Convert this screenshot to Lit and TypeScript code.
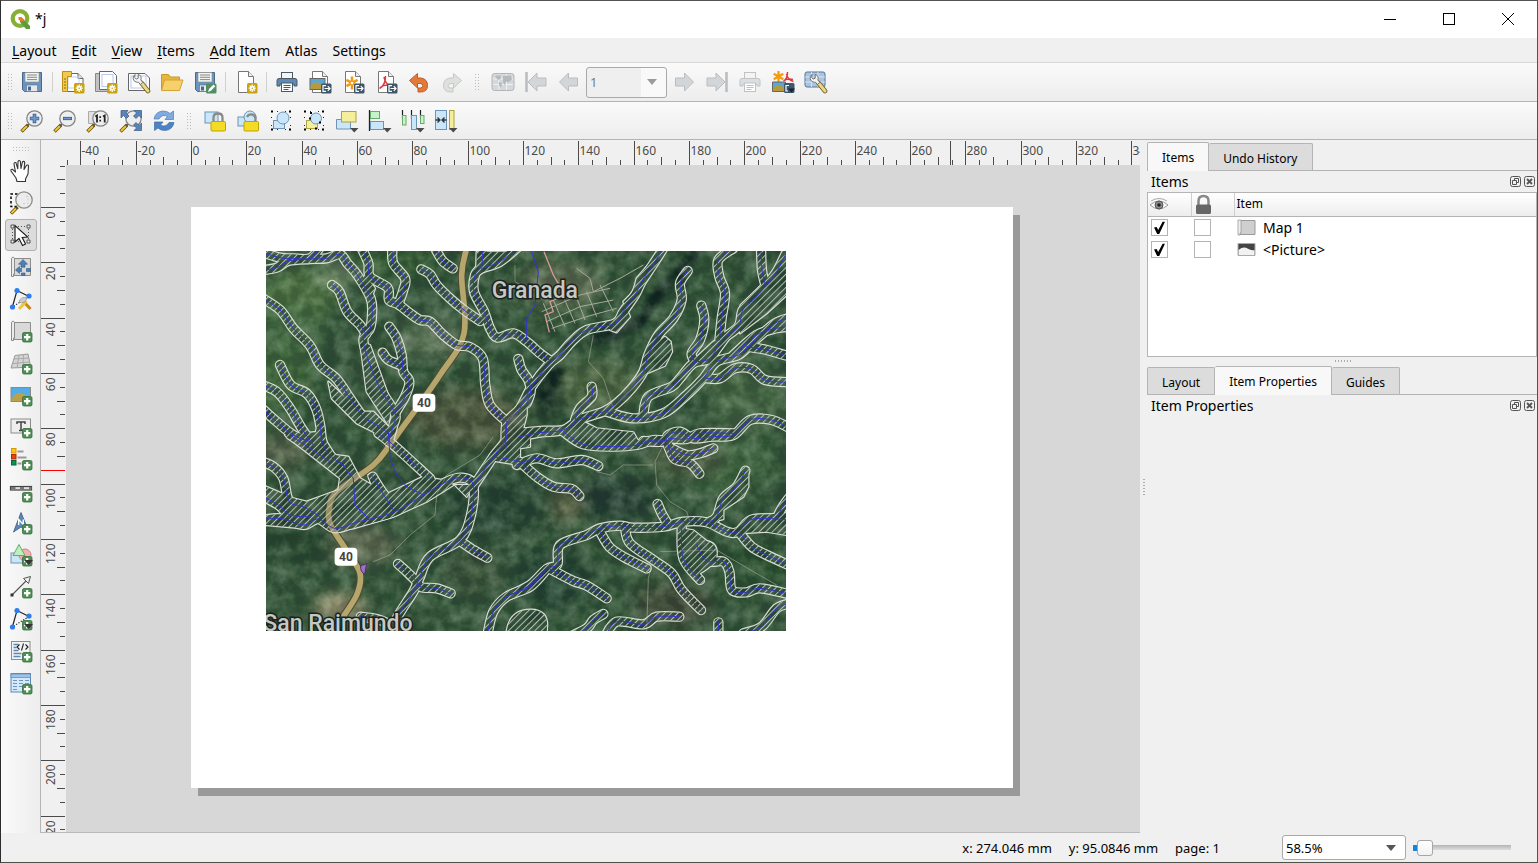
import { LitElement, html, svg, css } from "lit";
import { customElement, property } from "lit/decorators.js";

/* ---------- icon fragments, all on a 24 x 24 grid ---------- */

const plus = svg`<rect x="13.5" y="13.5" width="9.5" height="9.5" rx="1.5" fill="#4f8f55" stroke="#35703c" stroke-width=".8"/><path d="M18.2 15v6.4M15 18.2h6.4" stroke="#fff" stroke-width="2.2"/>`;
const gear = svg`<rect x="13" y="13" width="10.5" height="10.5" rx="1.5" fill="#c9a20c"/><path d="M18.2 14.5v7.4M14.6 18.2h7.3M15.7 15.6l5.2 5.2M20.9 15.6l-5.2 5.2" stroke="#fff" stroke-width="1.3"/><circle cx="18.2" cy="18.2" r="2.1" fill="#fff"/><circle cx="18.2" cy="18.2" r=".8" fill="#c9a20c"/>`;
const exp = svg`<rect x="13" y="13.5" width="10.5" height="10" rx="1.5" fill="#3d566b"/><path d="M18 15.7h-3v5.6h3M16.5 18.5h5M19.8 16.2l2.2 2.3-2.2 2.3" fill="none" stroke="#fff" stroke-width="1.2"/>`;
const drop = svg`<path d="M15 19h8.5l-4.2 4.5z" fill="#4a4a4a"/>`;
const sheet = svg`<path d="M4.500 1.500h10l5 5v16h-15z" fill="#fff" stroke="#777"/><path d="M14.500 1.500v5h5" fill="#eee" stroke="#777"/>`;
const disk = svg`<path d="M2.500 2.500h19v19h-17l-2-2z" fill="#6b94bf" stroke="#48698c"/><rect x="5" y="2.500" width="14" height="9.500" fill="#f2f2ee" stroke="#8b8b85" stroke-width=".6"/><path d="M7 5h10M7 7.300h10M7 9.600h10" stroke="#888"/><rect x="6.500" y="15" width="11" height="6.500" fill="#e8e8ec" stroke="#55708f" stroke-width=".6"/><rect x="8" y="16.500" width="3" height="4" fill="#48698c"/>`;
const lens = svg`<path d="M1.500 22.500l6.500-6.500" stroke="#5b4a18" stroke-width="3.400"/><path d="M2 22l5-5" stroke="#f3c62e" stroke-width="2"/><path d="M7 17l2.500-2.500" stroke="#555" stroke-width="2"/><circle cx="14.500" cy="9.500" r="7.700" fill="#eeeeee" stroke="#858585" stroke-width="1.300"/>`;
const scroll = svg`<path d="M5 3.500h16.500v17H5z" fill="#d9d9d9" stroke="#8c8c8c"/><path d="M2.500 3.200q1.500-2.500 3 0V19h-1v2.500h-2z" fill="#ececec" stroke="#8c8c8c"/>`;
const wrench = svg`<path d="M14.500 13l6.500 8" stroke="#6c5a22" stroke-width="4.600" stroke-linecap="round"/><path d="M14.500 13l6.500 8" stroke="#ecd783" stroke-width="3" stroke-linecap="round"/><path d="M8 4.500a4.200 4.200 0 0 0 1 7.500q1.500.5 2.500.2l2 2.300 2.300-2.200-2-2.300a4 4 0 0 0-2.600-5.600v3.800l-2 .8-1.600-1.500z" fill="#f3f3f3" stroke="#666" stroke-width=".9"/>`;
const printer = (a: string, b: string) => svg`<rect x="6.500" y="2.500" width="11" height="7" fill="#f4f4f4" stroke="${b}"/><path d="M4 8.500h16q2 0 2 2v5.500h-3v-2H5v2H2v-5.500q0-2 2-2z" fill="${a}" stroke="${b}"/><rect x="6.500" y="13" width="11" height="8.500" fill="#fff" stroke="${b}"/><path d="M8.500 15.500h7M8.500 17.500h7M8.500 19.500h5" stroke="${b}"/>`;
const landscape = svg`<rect x="2" y="8.500" width="15" height="11" fill="#5aa7d6" stroke="#666"/><path d="M2.500 15q5-4 8-2t6 3v3h-14z" fill="#b79a3e"/>`;
const star = svg`<path d="M11 6.500v13M5.400 9.800l11.200 6.400M16.600 9.800L5.400 16.200" stroke="#f39a12" stroke-width="2.500"/><circle cx="11" cy="13" r="1.300" fill="#fff"/>`;
const acro = svg`<path d="M5.500 18.500q6-3 6-12.500M10 7q1 8 9 9.500M6 17.500q6-4 12-1.500" fill="none" stroke="#e0383a" stroke-width="1.500"/>`;
const nodes = svg`<path d="M3.500 19.500L8 3.500l12 6" fill="none" stroke="#222" stroke-width="1.200"/><path d="M20 9.500l-16 10" stroke="#222" stroke-width="1.100" stroke-dasharray="1.300 1.500"/><circle cx="8" cy="3.500" r="2.600" fill="#2b7df0"/><circle cx="20" cy="9" r="2.600" fill="#2b7df0"/><circle cx="3.500" cy="20" r="2.600" fill="#2b7df0"/>`;
const arrow = "M2 12l9-9v5h9v8h-9v5z";
const dots = svg`<path d="M2 2.500h2M2 20.500h2M20 2.500h2M20 20.500h2" stroke="#000" stroke-width="2"/><path d="M8 2.500h10M8 20.500h10M2.500 8v10M21.500 8v10" stroke="#222" stroke-dasharray="1 7"/>`;
const worldmap = svg`<rect x="1" y="3.500" width="22" height="17" rx="2.500" fill="#d5d8da" stroke="#b2b6b9"/><path d="M2 9h20M2 14.500h20M8 4v16M15.500 4v16" stroke="#f6f6f6" stroke-width=".8"/><path d="M4 6l5-1 1 3-2 2-2-1zM8 12l3 1-1 5-2-3zM12 6l8-.5 1 4-4 3-2-1-1 4-2-3z" fill="#b3b9bd"/>`;

const icons: Record<string, unknown> = {
  save: disk,
  newLayout: svg`<path d="M3 3.500h14l5 5v13H3z" fill="#fff" stroke="#666"/><path d="M17 3.500v5h5" fill="#ddd" stroke="#666"/><rect x="7" y="7" width="11" height="11" fill="none" stroke="#c3d0f0"/><path d="M1.500 1.500h9v5h-4v15h-5z" fill="#f2c94b" stroke="#b98f15"/><path d="M3 9h2M3 12h2M3 15h2M3 18h2" stroke="#8b6a0c"/>${gear}`,
  duplicate: svg`<path d="M1.500 3.500H18v18H1.500z" fill="#c2c2c2" stroke="#888"/><path d="M5.500 1.500h13l4 4v14h-17z" fill="#fff" stroke="#666"/><rect x="8" y="4.500" width="11" height="12" fill="none" stroke="#b9c8ee"/>${gear}`,
  manager: svg`<path d="M1.500 3.500H18l4.500 4.500v12.500h-21z" fill="#fff" stroke="#666"/><rect x="4" y="6" width="15" height="12" fill="none" stroke="#b9c8ee"/>${wrench}`,
  open: svg`<path d="M1.500 20V4.500h7l2 2.500h9v5" fill="#e5b640" stroke="#c99a26"/><path d="M1.500 20.500L4.500 10h18.500l-3.500 10.500z" fill="#f6d06a" stroke="#d3a431"/>`,
  saveAs: svg`${disk}<rect x="13" y="13.500" width="10.500" height="10" rx="1.500" fill="#4f8f63"/><path d="M15 22l1-3 4.500-4.500 1.800 1.800L18 20.800z" fill="#fff"/>`,
  addPage: svg`${sheet}${gear}`,
  print: printer("#5f88b3", "#4b5a68"),
  image: svg`${sheet}${landscape}${exp}`,
  svgOut: svg`${sheet}${star}${exp}`,
  pdf: svg`${sheet}${acro}${exp}`,
  undo: svg`<path d="M2.500 10.500l8-7v4.500h3.500q6.500 1 6.500 7.500t-7 6.500h-2.500v-4h2.500q2.500-.5 2.300-2.500t-2.800-2H10.500v4.500z" fill="#e2793a" stroke="#c05c22"/>`,
  redo: svg`<path d="M21.500 10.500l-8-7v4.500H10q-6.500 1-6.500 7.500T10.500 22H13v-4h-2.500q-2.500-.5-2.300-2.500t2.800-2h2.500v4.500z" fill="#dde0dd" stroke="#c5c9c5"/>`,
  preview: worldmap,
  first: svg`<path d="M2.500 2v20" stroke="#b9bdc0" stroke-width="2.500"/><path d="${arrow}" transform="translate(2)" fill="#d2d6d9" stroke="#b9bdc0"/>`,
  prev: svg`<path d="${arrow}" transform="translate(.5)" fill="#d2d6d9" stroke="#b9bdc0"/>`,
  next: svg`<path d="${arrow}" transform="matrix(-1 0 0 1 23.500 0)" fill="#d2d6d9" stroke="#b9bdc0"/>`,
  last: svg`<path d="M21.500 2v20" stroke="#b9bdc0" stroke-width="2.500"/><path d="${arrow}" transform="matrix(-1 0 0 1 22 0)" fill="#d2d6d9" stroke="#b9bdc0"/>`,
  printOff: printer("#dcdfe1", "#c0c3c5"),
  atlasOut: svg`<path d="M7.500 1v11M2.700 3.800l9.600 5.500M12.300 3.800L2.700 9.300" stroke="#f39a12" stroke-width="2.200"/><path d="M12.500 11q4-2 4-9M15.500 4q1 6 7 7.500M13 10.500q4-2.500 9-1" fill="none" stroke="#e0383a" stroke-width="1.500"/><path d="M1.500 12h13v9.500h-13z" fill="#5aa7d6" stroke="#666"/><path d="M2 18q4-4 7-2.500t5 2V21H2z" fill="#b79a3e"/><rect x="13" y="13" width="10.500" height="10" rx="1.500" fill="#3d566b"/><path d="M18 15.500h-3v5.500h2" fill="none" stroke="#fff" stroke-width="1.200"/><path d="M17 18.500h7l-3.500 4z" fill="#1c2226"/>`,
  atlasSet: svg`<rect x="1" y="2" width="20" height="15" rx="2" fill="#a9c4e0" stroke="#55759a"/><path d="M1 7h20M1 12h20M7.500 2v15M14 2v15" stroke="#e5eef7" stroke-width=".8"/>${wrench}`,
  zoomIn: svg`${lens}<path d="M14.500 4.800v9.400M9.800 9.500h9.400" stroke="#3d5f8d" stroke-width="3.600"/><path d="M14.500 5.500v8M10.500 9.500h8" stroke="#6f9bd0" stroke-width="1.800"/>`,
  zoomOut: svg`${lens}<path d="M10 9.500h9" stroke="#3d5f8d" stroke-width="3.200"/><path d="M10.700 9.500h7.600" stroke="#6f9bd0" stroke-width="1.500"/>`,
  zoomOne: svg`<path d="M2.500 2.500H14v12H2.500z" fill="#e2e2e2" stroke="#aaa"/>${lens}<path d="M9.300 7.500l1.700-1v7M17 7.500l1.700-1v7" fill="none" stroke="#222" stroke-width="1.800"/><path d="M14.200 7.300v1.800M14.200 10.800v1.800" stroke="#222" stroke-width="1.700"/>`,
  zoomFull: svg`${lens}<path d="M2 1.500h7L7 4l3 3-2.500 2.500-3-3L2 9zM22.500 1.500V9L20 6.500l-3 3L14.500 7l3-3-2.500-2.500zM22.500 21.500H15l2.500-2.500-3-3 2.500-2.500 3 3 2.500-2.500z" fill="#5884b8" stroke="#34577f" stroke-width=".7"/>`,
  refresh: svg`<path d="M2 10q1.500-7.500 9-8 4.500 0 7 2.500L21.500 2v8.500H13l2.500-3q-5-3-8.500 2.500z" fill="#7fabdf" stroke="#4a7cb8" stroke-width=".7"/><path d="M22 13.500q-1.500 7.500-9 8-4.500 0-7-2.500l-3.500 2.500V13H11l-2.500 3q5 3 8.500-2.500z" fill="#4d82c4" stroke="#3c6ba6" stroke-width=".7"/>`,
  lock: svg`<rect x="2" y="3" width="13" height="11" fill="#c9e6fb" stroke="#6d94b5"/><path d="M10.500 13V8.500q0-4 4.500-4t4.500 4V13" fill="none" stroke="#8a8a8a" stroke-width="2.300"/><rect x="8" y="12.500" width="14.500" height="9.500" rx="1" fill="#f4db25" stroke="#c2a400"/>`,
  unlock: svg`<rect x="2" y="8" width="11" height="9" fill="#c9e6fb" stroke="#6d94b5"/><circle cx="14" cy="8" r="6" fill="#c9e6fb" stroke="#6d94b5"/><path d="M11 8q1.500-3 5-2.500t3.500 4V13" fill="none" stroke="#8a8a8a" stroke-width="2.300"/><rect x="8" y="12.500" width="14.500" height="9.500" rx="1" fill="#f4db25" stroke="#c2a400"/>`,
  group: svg`${dots}<rect x="4.500" y="11.500" width="11" height="8" fill="#c9e6fb" stroke="#6d94b5"/><circle cx="14" cy="9" r="6" fill="#c9e6fb" stroke="#6d94b5"/>`,
  ungroup: svg`${dots}<rect x="4.500" y="11.500" width="11" height="8" fill="#f4ee9d" stroke="#aaa53e"/><circle cx="14" cy="9.500" r="5.500" fill="#c9e6fb" stroke="#6d94b5"/><path d="M7 9.500h2M17 13.500h2M13 19.500h2M8 4h2" stroke="#000" stroke-width="2"/>`,
  raise: svg`<path d="M1.500 10.500h14v9.500h-14z" fill="#c9e6fb" stroke="#6d94b5"/><rect x="6.500" y="2.500" width="14.500" height="10.500" fill="#f4ee9d" stroke="#aaa53e"/>${drop}`,
  align: svg`<path d="M1.500 1v21" stroke="#222" stroke-width="1.300"/><rect x="2.500" y="2.500" width="9" height="7" fill="#c8f3ca" stroke="#68a96c"/><rect x="2.500" y="12.500" width="13" height="8" fill="#c9e6fb" stroke="#6d94b5"/>${drop}`,
  distribute: svg`<path d="M1.500 1v9M10.500 1v9M19.500 1v8" stroke="#222" stroke-width="1.200"/><rect x="1.500" y="6.500" width="3.500" height="9.500" fill="#c8f3ca" stroke="#68a96c"/><rect x="10.500" y="6.500" width="5" height="14" fill="#c9e6fb" stroke="#6d94b5"/><rect x="19.500" y="6.500" width="3.500" height="8" fill="#c8f3ca" stroke="#68a96c"/>${drop}`,
  resize: svg`<rect x="1.500" y="1.500" width="11" height="19" fill="#c9e6fb" stroke="#6d94b5"/><rect x="15.500" y="1.500" width="4.500" height="19" fill="#f4ee9d" stroke="#aaa53e"/><path d="M1.500 11h4M3.500 8.500L6 11l-2.500 2.500M12.500 11h-4M10.500 8.500L8 11l2.500 2.500" fill="none" stroke="#333" stroke-width="1.300"/>${drop}`,
  pan: svg`<path d="M8 22.500l-1-3.500-5-7q-.5-2 1.500-1.700L6.500 13 5 5q.2-2.200 2-1.200l1.800 6L9 2.500q1-2 2.400 0l.6 7 1.400-6.500q1.400-1.400 2.300.3L15 10.500l2.500-4.300q1.800-.8 2 .8L19 15l-2.500 5v2.500z" fill="#fff" stroke="#333" stroke-width="1.100" stroke-linejoin="round"/>`,
  zoomBox: svg`<path d="M8.500 3H2v12.500h6" fill="none" stroke="#000" stroke-width="1.500" stroke-dasharray="2.500 2"/><path d="M2 22.500l6.500-6.500" stroke="#5b4a18" stroke-width="3.400"/><path d="M2.500 22l4.500-4.500" stroke="#f3c62e" stroke-width="2"/><circle cx="15" cy="9" r="8.200" fill="#ececec" stroke="#8c8c8c" stroke-width="1.300"/><path d="M17 5.500h2v7h-5" fill="none" stroke="#ccc" stroke-dasharray="2 2"/>`,
  select: svg`<path d="M6 3.500h12M3.500 6v12M19.500 6v12M6 18.500h12" stroke="#555" stroke-dasharray="1 2"/><path d="M2 2h3v3H2zM18 2h3v3h-3zM2 17h3v3H2zM18 17h3v3h-3z" fill="#eee" stroke="#444" stroke-width=".9"/><path d="M6 2.500v16.500l4-3.500 3.500 7 3-1.500-3.300-6.500 5.500-.5z" fill="#fff" stroke="#222" stroke-width="1.200"/>`,
  moveContent: svg`${scroll}<path d="M14 4.500l4.500 4.700H16v3h-4v-3H9.500zM6.500 15l4-3.500v2h2v3h-2v2zM21.500 13.500v3h-4v-3zM12.500 18h3.500v2.500h-3.500z" fill="#4d7fb3" stroke="#335c87" stroke-width=".6"/>`,
  editNodes: svg`${nodes}<path d="M14 14l7.500 8" stroke="#c68a16" stroke-width="3"/><path d="M17.500 14L10 22" stroke="#ecc53a" stroke-width="3"/><path d="M10 14q3-5 8-3l-2 4-4 1z" fill="#ccc" stroke="#888" stroke-width=".6"/>`,
  addMap: svg`${scroll}${plus}`,
  add3d: svg`<path d="M2 17L6 4.500l13-1.500 2.500 12-8 1.500z" fill="#d4d4d4" stroke="#999"/><path d="M5 8l15-1M3.500 12.500l17-1.500M10 4l-2 13M14.500 3.500L14 16" stroke="#aaa" fill="none"/>${plus}`,
  addPicture: svg`<rect x="2" y="4.500" width="19.500" height="14" fill="#53ace3" stroke="#8a8a8a"/><path d="M2.500 15q7-7 11-4.500t7.500 2v5.500H2.500z" fill="#bda048"/>${plus}`,
  addLabel: svg`<rect x="2" y="4" width="19.500" height="14" fill="#eee" stroke="#8c8c8c"/><path d="M8 9V7h8v2M12 7v8.500M10 15.500h4" fill="none" stroke="#444" stroke-width="1.500"/>${plus}`,
  addLegend: svg`<rect x="2.500" y="1.500" width="4.500" height="4.500" fill="#fbc412" stroke="#d59a00"/><rect x="2.500" y="7.500" width="4.500" height="4.500" fill="#e8420d" stroke="#b02c00"/><rect x="2.500" y="13.500" width="4.500" height="4.500" fill="#0a9156" stroke="#06673c"/><path d="M8.500 4.500h6M8.500 10.500h9M8.500 16.500h4" stroke="#999" stroke-width="1.800"/>${plus}`,
  addScale: svg`<rect x="1.500" y="7.500" width="21" height="3.500" fill="#ddd" stroke="#444" stroke-width="1.200"/><path d="M2 9.200h4.500M11 9.200h4M20 9.200h2.500" stroke="#777" stroke-width="2.400"/>${plus}`,
  addNorth: svg`<path d="M12 1.500L19.500 20 12 16l-7.500 5z" fill="#5b88ba" stroke="#345a83" stroke-width=".8"/><path d="M9.700 14V8.500l4.600 5V8.500" fill="none" stroke="#fff" stroke-width="1.400"/>${plus}`,
  addShape: svg`<rect x="2" y="10" width="12" height="10" fill="#c9e6fb" stroke="#6d94b5"/><circle cx="16" cy="12" r="6" fill="#f2b0b0" stroke="#d08282"/><path d="M10 1.500l6 11H4z" fill="#bdf0bf" stroke="#68a96c"/>${plus}<path d="M15 17h9l-4.500 5z" fill="#333"/>`,
  addArrow: svg`<path d="M3 20L18.500 4.500" stroke="#555" stroke-width="1.100"/><path d="M21.500 1.500l-2 7-5-5z" fill="#eee" stroke="#555"/><rect x="1.500" y="18.500" width="3" height="3" fill="#333"/>${plus}`,
  addNodes: svg`${nodes}${plus}<path d="M15 17h9l-4.500 5z" fill="#333"/>`,
  addHtml: svg`<rect x="2.500" y="2.500" width="18.500" height="18" fill="#f3f3f3" stroke="#8c8c8c"/><path d="M4.500 5.500h5M4.500 8.500h3M4.500 11.500h5M4.500 14.500h8M4.500 17.500h7" stroke="#5b88ba" stroke-width="1.300"/><path d="M10.500 5.500L8 8l2.500 2.500M16.500 5.500L19 8l-2.500 2.500M14.500 4.500l-2 7" fill="none" stroke="#222" stroke-width="1.100"/>${plus}`,
  addTable: svg`<rect x="2" y="2.500" width="19.500" height="18.500" fill="#d5e8f7" stroke="#5b88ba"/><path d="M2 3h19.500v3.500H2z" fill="#9dc3e6" stroke="#5b88ba" stroke-width=".7"/><path d="M4 9.500h4M10 9.500h4M16 9.500h4M4 12.500h4M10 12.500h4M16 12.500h4M4 15.500h4M10 15.500h4M4 18.500h4" stroke="#6b96c3" stroke-width="1.100"/>${plus}`,
};

const glyph = (name: string) => html`<svg class="glyph" viewBox="0 0 24 24" fill="none" aria-hidden="true">${icons[name]}</svg>`;

/* ---------- map artwork: three units per screen pixel ---------- */

/* Each line is a list of x y pairs, drawn as a smooth curve through them. */
const streamTiles: { dx: number; dy: number; lines: string[] }[] = [
  {
    dx: 0, dy: 0, lines: [
      "0 77 50 68 85 48 150 42 200 40 240 28 262 55 292 90 332 160 336 210 330 250 310 285 330 360 360 430 405 505 400 540 386 590",
      "0 20 60 38 100 40 150 40 178 10", "216 120 238 140 262 200 300 240 318 268",
      "0 155 60 195 100 250 150 302 180 360 230 402 270 460 310 515 350 540 390 568",
      "305 10 325 55 330 95 383 128 387 165 415 178 450 205 480 225 510 230 550 270 590 300 630 306 668 340 676 420 690 480 740 530",
      "397 10 400 55 435 100 430 135 415 178", "484 73 510 88 530 120 570 160 612 195 660 228",
      "528 15 548 48 578 70", "668 10 665 60 645 90 642 140 672 200 690 250 712 278 760 265 800 290 840 325 868 345",
      "770 10 720 50 665 70", "388 245 410 280 425 330 430 380 448 410 435 455 405 505",
      "368 323 385 345 425 362", "60 360 92 420 140 445 168 490 182 550 185 600",
      "0 418 50 440 90 490 125 550 160 600", "0 485 50 530 100 570 150 590",
      "775 342 785 375 805 405 812 440 800 475",
    ],
  },
  {
    dx: 780, dy: 0, lines: [
      "430 10 398 60 365 110 345 150 310 200 285 235 200 255 155 290 120 330 85 360 35 425 0 490 -40 535 -42 610",
      "503 78 480 115 485 165 460 220 415 270 385 330 370 380 335 430 290 475 250 500 180 523 130 555 60 563 0 575",
      "544 182 553 225 540 285 515 325 525 350", "640 10 595 45 598 95 615 145 605 220 598 285",
      "723 10 726 75 736 120", "800 20 770 80 735 125 700 165 668 195 655 245 605 285 570 340 520 355 480 400 455 425 385 455 370 510",
      "810 218 765 235 700 290 655 330 590 350 550 400 500 450 430 505 340 520 260 500",
      "680 305 740 315 810 335", "560 400 600 400 645 370 695 372 735 405 810 412",
      "215 425 215 455 180 490 165 525", "810 245 770 250 710 270 640 330",
      "370 588 430 590 445 570 480 560 520 580 575 575 640 570 690 525 755 525 810 550",
    ],
  },
  {
    dx: 0, dy: 570, lines: [
      "0 78 40 95 70 130 88 200 130 215 180 245", "0 180 55 210 90 240 150 245",
      "0 256 60 250 130 270 175 252 225 280 290 262 400 232 490 180 560 140 605 128 640 150 633 240 600 315 510 365 478 430 460 470 410 550 395 600",
      "355 -5 400 30 450 75 510 130", "640 155 700 65 738 15 738 -30", "700 65 760 75 795 85",
      "600 318 640 345 682 368", "414 387 440 410 470 440 485 457 530 460 572 475",
      "302 545 350 552 395 570", "682 600 700 530 740 485 810 455 860 403",
      "180 -10 200 50 255 95", "90 0 150 40 210 80", "338 125 365 170 400 225",
    ],
  },
  {
    dx: 780, dy: 570, lines: [
      "-10 90 50 70 110 85 185 75 235 93", "10 90 50 125 100 155 155 162 178 183",
      "-30 480 30 450 80 402 112 388 120 330 200 300 240 280 300 272 340 278 430 275 490 260 560 262 620 290 655 290 700 252 810 255",
      "440 15 462 70 510 85 538 116", "445 35 500 60 540 55 580 40", "413 207 425 235 445 270",
      "676 107 650 155 610 190 590 245 565 262", "485 275 490 370 540 435",
      "530 330 560 378 610 380 628 410 636 465 680 472 720 460 810 478", "660 295 695 335 740 360 810 392",
      "240 290 268 335 310 365 380 400", "315 280 330 325 400 375 455 415 485 465 543 525",
      "90 402 160 438 200 452 260 490", "140 610 200 580 220 555 250 537",
      "255 605 290 560 370 568 410 545 478 545", "595 610 595 562", "670 595 725 575 770 520 810 505",
      "810 185 785 220 770 250", "130 -10 190 28 280 35 350 30 400 15 440 18",
      "445 10 500 12 540 -5 640 -5",
    ],
  },
];

const road = "620 10 605 90 612 265 540 390 400 585 340 660 230 740 208 790 212 840 262 920 300 985 290 1050 240 1130 225 1165";

function smooth(line: string): string {
  const n = line.split(" ").map(Number);
  const pts: [number, number][] = [];
  for (let i = 0; i + 1 < n.length; i += 2) pts.push([n[i], n[i + 1]]);
  let d = `M${pts[0]}`;
  for (let i = 0; i < pts.length - 1; i++) {
    const a = pts[Math.max(0, i - 1)], b = pts[i], c = pts[i + 1], e = pts[Math.min(pts.length - 1, i + 2)];
    d += `C${b[0] + (c[0] - a[0]) / 6} ${b[1] + (c[1] - a[1]) / 6} ${c[0] - (e[0] - b[0]) / 6} ${c[1] - (e[1] - b[1]) / 6} ${c[0]} ${c[1]}`;
  }
  return d;
}

const floodplains = [
  "M205 410L300 500 340 500 385 545 390 580 340 560 290 535 215 460z",
  "M650 20H765L740 38 690 68 648 95z", "M315 90L345 130 330 170 300 120z",
  "M300 290L330 300 395 480 385 540 320 440z",
  "M1190 30L1130 100 1120 140 1090 170 1110 215 1070 262 1050 255z",
  "M1215 275L1232 290 1236 320 1215 362 1160 385 1150 350 1175 300z",
  "M1515 110L1580 30V150L1520 205 1440 265 1442 180z", "M1300 345L1360 290 1420 265 1365 340z",
  "M730 525L800 475 800 510 790 550 850 545 905 545 790 580 730 600z",
  "M905 548L970 530 1010 550 1120 562 1130 580 1140 595 1100 605 980 600 930 580z",
  "M75 570L240 700 235 735 140 770 100 760 18 725V765L75 810 18 815V840L130 850 180 830 220 860 280 850 400 815 500 770 580 720 545 705 490 695 385 745 345 690 325 690 335 720 300 700 265 635 225 630 180 560z",
  "M700 640L740 575 810 550V605L780 610V635z", "M585 720L640 720 620 755z",
  "M1465 680L1465 725 1450 755 1390 795V822L1350 832 1380 770 1430 730z",
  "M1262 850L1300 856 1340 888Q1372 895 1370 925 1372 955 1320 985L1320 1000 1270 960z",
  "M1450 850L1490 810 1580 805V870L1520 860 1440 865z",
  "M740 1158Q750 1095 810 1094T860 1158z",
];

const fields = [
  [120, 150, 120, 80, "#56804f"], [230, 90, 60, 40, "#7d9a78"], [90, 260, 110, 70, "#4b7650"],
  [400, 40, 140, 60, "#3a663f"], [520, 280, 100, 60, "#6a8369"], [620, 520, 180, 90, "#54604a"],
  [60, 400, 110, 90, "#48754a"], [330, 400, 90, 120, "#3f6248"], [900, 120, 130, 70, "#66775f"],
  [1000, 420, 160, 70, "#56724f"], [870, 440, 40, 80, "#1d3631"], [1480, 470, 130, 100, "#4b6f4f"],
  [300, 900, 110, 60, "#6a7460"], [120, 880, 110, 80, "#33543e"], [240, 1085, 80, 40, "#a59b7c"],
  [700, 780, 160, 100, "#2f5040"], [1060, 760, 120, 70, "#294640"], [920, 780, 40, 50, "#6f7358"],
  [1400, 660, 150, 80, "#44704b"], [1280, 640, 120, 60, "#54694f"], [1240, 1080, 120, 70, "#485545"],
  [880, 1000, 120, 90, "#2c5040"], [1500, 960, 120, 70, "#335c3e"], [60, 620, 90, 50, "#62705a"],
  [640, 980, 100, 70, "#3f5c45"], [1350, 380, 120, 60, "#4c6f4e"],
] as const;

const tileLines = () => streamTiles.map(t => svg`<g transform="translate(${t.dx} ${t.dy})">${t.lines.map(l => svg`<path d="${smooth(l)}"/>`)}</g>`);

@customElement("map-picture")
class MapPicture extends LitElement {
  static styles = css`
    :host { display: block; }
    svg { display: block; width: 100%; height: 100%; }
    .place { font-family: Roboto, "Noto Sans", sans-serif; font-weight: 500; fill: #c6c8c4; stroke: #1b211c; stroke-width: 9px; paint-order: stroke; }
    .route { font-family: Roboto, "Noto Sans", sans-serif; font-weight: 700; fill: #444; }
  `;
  render() {
    return html`<svg viewBox="18 18 1560 1140" preserveAspectRatio="none" fill="none" role="img" aria-label="Map 1">
      <defs>
        <filter id="grain" x="0" y="0" width="100%" height="100%" color-interpolation-filters="sRGB">
          <feTurbulence type="fractalNoise" baseFrequency=".022" numOctaves="4" seed="8"/>
          <feColorMatrix values="1.500 0 0 0 -.55  1.400 .1 0 0 -.48  1.400 0 0 0 -.55  0 0 0 0 .26"/>
        </filter>
        <filter id="soft"><feGaussianBlur stdDeviation="22"/></filter>
        <filter id="edge"><feGaussianBlur stdDeviation="7"/></filter>
        <pattern id="hatch" width="14" height="14" patternUnits="userSpaceOnUse" patternTransform="rotate(45)"><path d="M1.500 0V14" stroke="#b4c0b5" stroke-width="3"/></pattern>
        <g id="streams" stroke-linejoin="round" stroke-linecap="round">${tileLines()}</g>
        <g id="plains" stroke-linejoin="round">${floodplains.map(d => svg`<path d="${d}"/>`)}</g>
        <mask id="inner" maskUnits="userSpaceOnUse" x="0" y="0" width="1600" height="1180">
          <use href="#streams" stroke="#fff" stroke-width="24"/><use href="#plains" fill="#fff"/>
        </mask>
        <mask id="outline" maskUnits="userSpaceOnUse" x="0" y="0" width="1600" height="1180">
          <use href="#streams" stroke="#fff" stroke-width="31"/><use href="#plains" fill="#fff" stroke="#fff" stroke-width="7"/>
          <use href="#streams" stroke="#000" stroke-width="24"/><use href="#plains" fill="#000"/>
        </mask>
      </defs>
      <rect x="18" y="18" width="1560" height="1140" fill="#3a5f45"/>
      <g filter="url(#soft)">${fields.map(([x, y, rx, ry, c]) => svg`<ellipse cx="${x}" cy="${y}" rx="${rx}" ry="${ry}" fill="${c}"/>`)}</g>
      <path d="M1310 20L1250 90 1190 150 1140 230 1060 270 990 285M900 370L870 410 855 470" stroke="#172d29" stroke-width="34" filter="url(#edge)"/>
      <rect x="18" y="18" width="1560" height="1140" filter="url(#grain)"/>
      <g stroke="#a8ab98" stroke-width="3">
        <path d="M845 200L960 150 1050 130M860 230L960 185 1060 165M875 250L980 215 1070 190M850 175L885 260M880 165L915 245M910 155L945 235M945 145L975 225M980 140L1010 215M1020 120L1060 200M950 70L990 100 1000 140 1080 100 1150 60"/>
        <path stroke-opacity=".6" d="M1000 270L985 350 1030 400 1060 490M1210 600L1185 650 1190 720 1230 770 1280 800 1290 830M700 575L660 630 560 690 530 750 525 810 450 870 390 930 340 950M1180 940L1165 1000 1160 1158M1200 920L1370 915 1480 980 1550 1020M765 60L765 110 800 130M1010 680L1050 690 1090 660H1180"/>
      </g>
      <path d="M852 20L880 90 915 150 870 170 880 200 855 210 868 262" stroke="#d69a96" stroke-width="4"/>
      <path d="${smooth(road)}" stroke="#4f4a2f" stroke-width="23"/>
      <path d="${smooth(road)}" stroke="#b5a66d" stroke-width="17"/>
      <g mask="url(#inner)"><rect x="18" y="18" width="1560" height="1140" fill="#1c2d2d" fill-opacity=".2"/><rect x="18" y="18" width="1560" height="1140" fill="url(#hatch)"/></g>
      <rect x="18" y="18" width="1560" height="1140" fill="#d9ddd5" mask="url(#outline)"/>
      <use href="#streams" stroke="#3235d2" stroke-width="3"/>
      <path d="M385 560L390 640 410 690 440 725 490 750M240 650L280 700 285 780 325 820M815 20L835 80 825 180 800 220 800 285" stroke="#3235d2" stroke-width="3"/>
      <path d="M302 962l18-6-6 32q-14-8-12-26z" fill="#9b6fc9" stroke="#4a315f" stroke-width="3"/>
      <text class="place" x="695" y="158" font-size="69">Granada</text>
      <text class="place" x="10" y="1158" font-size="69">San Raimundo</text>
      <rect x="458" y="446" width="68" height="54" rx="12" fill="#fff"/><text class="route" x="492" y="485" font-size="36" text-anchor="middle">40</text>
      <rect x="224" y="908" width="68" height="54" rx="12" fill="#fff"/><text class="route" x="258" y="948" font-size="36" text-anchor="middle">40</text>
    </svg>`;
  }
}

/* ---------- rulers ---------- */

const PX_PER_MM = 2.766;

@customElement("page-ruler")
class PageRuler extends LitElement {
  @property({ type: Boolean }) vertical = false;
  @property({ type: Number }) origin = 0;
  @property({ type: Number }) marker = 0;
  @property({ type: Number }) last = 345;
  static styles = css`
    :host { display: block; overflow: hidden; background: #f0f0f0; }
    svg { display: block; width: 100%; height: 100%; }
    text { font: 12px "Noto Sans", sans-serif; fill: #4b4b4b; }
    .tick { stroke: #4b4b4b; stroke-width: 1px; shape-rendering: crispEdges; }
    .cursor { stroke: #4b4b4b; shape-rendering: crispEdges; }
    .cursor.red { stroke: #f00; }
  `;
  render() {
    const marks = [];
    for (let mm = -45; mm <= this.last; mm += 5) {
      const p = Math.round(this.origin + mm * PX_PER_MM) + 0.5;
      if (p < 0) continue;
      const major = mm % 20 === 0;
      const len = major ? 24 : mm % 10 === 0 ? 8 : 5;
      marks.push(this.vertical
        ? svg`<line class="tick" x1="${24 - len}" x2="24" y1="${p}" y2="${p}"/>${major ? svg`<text transform="translate(14 ${p + 4}) rotate(-90)" text-anchor="end">${mm}</text>` : ""}`
        : svg`<line class="tick" x1="${p}" x2="${p}" y1="${25 - len}" y2="25"/>${major ? svg`<text x="${p + 1}" y="15">${mm}</text>` : ""}`);
    }
    return html`<svg aria-hidden="true">${marks}${this.vertical
      ? svg`<line class="cursor red" x1="0" x2="24" y1="${this.marker}" y2="${this.marker}"/>`
      : svg`<line class="cursor" x1="${this.marker}" x2="${this.marker}" y1="1" y2="25"/>`}</svg>`;
  }
}

/* ---------- application window ---------- */

const fileTools = ["save", "|", "newLayout", "duplicate", "manager", "open", "saveAs", "|", "addPage", "|", "print", "image", "svgOut", "pdf", "undo", "redo", ":", "preview", "first", "prev", "#", "next", "last", "printOff", "atlasOut", "atlasSet"];
const viewTools = ["zoomIn", "zoomOut", "zoomOne", "zoomFull", "refresh", ":", "lock", "unlock", "group", "ungroup", "raise", "align", "distribute", "resize"];
const sideTools = ["pan", "zoomBox", "select", "moveContent", "editNodes", "addMap", "add3d", "addPicture", "addLabel", "addLegend", "addScale", "addNorth", "addShape", "addArrow", "addNodes", "addHtml", "addTable"];
const disabledTools = ["redo", "preview", "first", "prev", "next", "last", "printOff"];

@customElement("app-root")
class AppRoot extends LitElement {
  static styles = css`
    :host { display: flex; flex-direction: column; height: 100vh; box-sizing: border-box; overflow: hidden; background: #f0f0f0; border: 1px solid #55524f; border-left-color: #2d2d2d; border-bottom-color: #50504a; color: #000; font: 14px/20px "Noto Sans", sans-serif; }
    button, select, input { font: inherit; color: inherit; margin: 0; }
    button { border: 0; background: none; padding: 0; display: grid; place-items: center; }
    .titlebar { display: flex; align-items: flex-start; height: 37px; background: #fff; padding-left: 8px; flex: none; }
    .logo { width: 22px; height: 22px; margin-top: 7px; }
    .title { flex: 1; margin: 0; padding-left: 4px; font-size: 14px; font-weight: 400; line-height: 36px; }
    .winbtn { width: 59px; height: 36px; }
    .menubar { display: flex; gap: 1px; height: 24px; padding-left: 4px; border-bottom: 1px solid #d8d8d8; flex: none; }
    .menubar button { padding: 0 7px; line-height: 26px; display: block; }
    .menubar u { text-underline-offset: 2px; }
    .toolbar { display: flex; align-items: center; height: 39px; flex: none; box-sizing: border-box; background: linear-gradient(#fafafa, #ededed); border-bottom: 1px solid #b4b4b4; }
    .toolbar + .toolbar { height: 38px; }
    .tool { width: 33px; height: 32px; }
    .glyph { width: 24px; height: 24px; display: block; }
    .sep { width: 8px; height: 20px; background: linear-gradient(#d0d0d0, #d0d0d0) center / 1px 100% no-repeat; }
    .grip { width: 14px; height: 18px; box-sizing: border-box; padding: 0 3px 0 6px; background: radial-gradient(circle, #bbb 25%, transparent 45%) 0 0 / 3px 3px; background-clip: content-box; background-origin: content-box; }
    .grip.mid { width: 18px; padding: 0 6px; }
    .combo { position: relative; display: block; box-sizing: border-box; }
    .combo select { appearance: none; width: 100%; height: 100%; box-sizing: border-box; border: 1px solid #a9a9a9; border-radius: 3px; background: #fff; padding: 0 3px; opacity: 1; }
    .combo svg { position: absolute; right: 10px; top: 50%; width: 10px; height: 6px; margin-top: -3px; pointer-events: none; }
    .combo.page { width: 81px; height: 31px; margin-left: 1px; font-size: 13px; }
    .combo.page select { background: linear-gradient(90deg, #efefef 68%, #f9f9f9 68%); color: #7d7d7d; }
    .combo.zoom { width: 124px; height: 25px; margin-left: 62px; }
    .main { flex: 1; min-height: 0; display: flex; }
    .side { width: 40px; flex: none; box-sizing: border-box; border-right: 1px solid #b4b4b4; display: flex; flex-direction: column; align-items: center; background: linear-gradient(90deg, #fafafa, #ededed); }
    .hgrip { width: 18px; height: 15px; flex: none; box-sizing: border-box; padding: 6px 0 3px; background: radial-gradient(circle, #bbb 25%, transparent 45%) 0 0 / 3px 3px; background-clip: content-box; background-origin: content-box; }
    .side .tool { width: 32px; box-sizing: border-box; flex: none; }
    .tool.on { background: #dcdcdc; border: 1px solid #b0b0b0; border-radius: 3px; }
    .work { flex: 1; min-width: 0; display: grid; grid-template: 25px minmax(0, 1fr) / 25px minmax(0, 1fr); border-bottom: 1px solid #b9b9b9; }
    .canvas { position: relative; overflow: hidden; background: #d7d7d7; }
    .sheet { position: absolute; left: 125px; top: 42px; width: 822px; height: 581px; background: #fff; box-shadow: 7px 8px 0 #999; }
    .sheet map-picture { position: absolute; left: 75px; top: 44px; width: 520px; height: 380px; }
    .vsplit { width: 7px; flex: none; display: grid; place-items: center; }
    .vsplit i { width: 2px; height: 17px; background: radial-gradient(circle, #aaa 40%, transparent 50%) 0 0 / 2px 3px; }
    .panel { width: 390px; flex: none; display: flex; flex-direction: column; }
    .tabs { display: flex; align-items: flex-end; height: 30px; border-bottom: 1px solid #b4b4b4; font-size: 12px; }
    .tabs button { height: 27px; padding: 3px 14px 0; border: 1px solid #b4b4b4; border-bottom: 0; border-left-width: 0; background: #dcdcdc; border-radius: 2px 2px 0 0; }
    .tabs button:first-child { border-left-width: 1px; }
    .tabs button.on { height: 29px; background: #f8f8f8; margin-bottom: -1px; padding-top: 2px; }
    .dockhead { display: flex; align-items: center; height: 20px; padding: 1px 2px 0 4px; }
    .dockhead h2 { flex: 1; margin: 0; font-size: 14px; font-weight: 400; line-height: 20px; }
    .dockhead button { width: 11px; height: 11px; margin: 0 0 2px 3px; }
    .dockhead svg { width: 11px; height: 11px; }
    .tree { height: 165px; box-sizing: border-box; border: 1px solid #b4b4b4; background: #fff; }
    table { width: 100%; border-collapse: collapse; table-layout: fixed; }
    th { height: 23px; padding: 0 0 0 2px; text-align: left; font-size: 12px; font-weight: 400; line-height: 22px; background: linear-gradient(#fff, #ededed); border-bottom: 1px solid #b4b4b4; box-sizing: border-box; }
    th + th { border-left: 1px solid #cfcfcf; }
    th svg { display: block; width: 20px; height: 20px; }
    td { height: 22px; padding: 0 0 0 3px; }
    td input { appearance: none; display: block; width: 17px; height: 17px; box-sizing: border-box; border: 1px solid #b4b4b4; background: #fff; }
    td input:checked::before { content: ""; display: block; width: 13px; height: 13px; margin: 1px; background: #000; clip-path: polygon(8% 50%, 28% 46%, 40% 70%, 74% 6%, 92% 6%, 48% 100%, 32% 100%); }
    .visible, .locked { width: 43px; }
    .entry { display: flex; align-items: center; gap: 7px; line-height: 22px; }
    .entry svg { width: 19px; height: 17px; }
    .hsplit { display: grid; place-items: center; height: 7px; }
    .hsplit i { width: 17px; height: 2px; background: radial-gradient(circle, #aaa 40%, transparent 50%) 0 0 / 3px 2px; }
    .status { height: 29px; flex: none; display: flex; align-items: center; justify-content: flex-end; padding-right: 26px; font-size: 13px; }
    .status output { margin-left: 17px; }
    .status input { appearance: none; width: 98px; height: 18px; margin-left: 7px; background: linear-gradient(#1583d8, #1583d8) left center / 6px 6px no-repeat, linear-gradient(#b4b4b4, #dedede) center / 100% 5px no-repeat; border-radius: 3px; }
    .status input::-webkit-slider-thumb { appearance: none; width: 16px; height: 16px; border: 1px solid #a6a6a6; border-radius: 3px; background: linear-gradient(#fff, #f2f2f2); }
  `;

  private tool(name: string) {
    if (name === "|") return html`<span class="sep"></span>`;
    if (name === ":") return html`<span class="grip mid"></span>`;
    if (name === "#") return this.combo("page", "Atlas page", "1", "#9b9b9b", true);
    return html`<button class="tool ${name === "select" ? "on" : ""}" aria-label=${name} ?disabled=${disabledTools.includes(name)}>${glyph(name)}</button>`;
  }

  private combo(kind: string, label: string, value: string, color: string, disabled: boolean) {
    return html`<label class="combo ${kind}"><select aria-label=${label} ?disabled=${disabled}><option>${value}</option></select><svg viewBox="0 0 10 6"><path d="M0 0h10L5 6z" fill=${color}/></svg></label>`;
  }

  private dock(title: string) {
    return html`<header class="dockhead"><h2>${title}</h2>
      <button aria-label="Float"><svg viewBox="0 0 11 11" fill="none" stroke="#555"><rect x=".5" y=".5" width="10" height="10" rx="2"/><path d="M4.500 4.500v-2h4v4h-2M2.500 4.500h4v4h-4z"/></svg></button>
      <button aria-label="Close"><svg viewBox="0 0 11 11" fill="none" stroke="#555"><rect x=".5" y=".5" width="10" height="10" rx="2"/><path d="M3 3l5 5M8 3L3 8" stroke-width="1.800"/></svg></button></header>`;
  }

  render() {
    const menus = ["Layout", "Edit", "View", "Items", "Add Item", "Atlas", "Settings"];
    return html`
      <header class="titlebar">
        <svg class="logo" viewBox="0 0 22 22"><circle cx="11" cy="10.500" r="7.300" fill="none" stroke="#84b135" stroke-width="4.200"/><path d="M11 11h3l7 7v3h-4l-6-7z" fill="#5d9a3a"/><path d="M9.500 9h3l3 3-2.500 2-3.500-2.500z" fill="#e87b2d"/></svg>
        <h1 class="title">*j</h1>
        <button class="winbtn" aria-label="Minimize"><svg width="12" height="12" stroke="#000"><path d="M0 6.500h12"/></svg></button>
        <button class="winbtn" aria-label="Maximize"><svg width="12" height="12" fill="none" stroke="#000"><rect x=".5" y=".5" width="11" height="11"/></svg></button>
        <button class="winbtn" aria-label="Close window"><svg width="12" height="12" stroke="#000"><path d="M0 0l12 12M12 0L0 12"/></svg></button>
      </header>
      <nav class="menubar">${menus.map((m, i) => html`<button>${i < 5 ? html`<u>${m[0]}</u>${m.slice(1)}` : m}</button>`)}</nav>
      <div class="toolbar"><span class="grip"></span>${fileTools.map(t => this.tool(t))}</div>
      <div class="toolbar"><span class="grip"></span>${viewTools.map(t => this.tool(t))}</div>
      <div class="main">
        <div class="side"><span class="hgrip"></span>${sideTools.map(t => this.tool(t))}</div>
        <div class="work">
          <span></span><page-ruler .origin=${125} .marker=${884.5}></page-ruler>
          <page-ruler vertical .origin=${42} .marker=${305.5} .last=${225}></page-ruler>
          <div class="canvas"><div class="sheet"><map-picture></map-picture></div></div>
        </div>
        <div class="vsplit"><i></i></div>
        <aside class="panel">
          <div class="tabs"><button class="on">Items</button><button>Undo History</button></div>
          ${this.dock("Items")}
          <div class="tree"><table>
            <thead><tr>
              <th class="visible" aria-label="Visible"><svg viewBox="0 0 20 20" fill="none"><path d="M0 11q9-8 18 0-9 8-18 0z" fill="#fff" stroke="#999"/><circle cx="9" cy="11" r="4" fill="#8a8f8a" stroke="#555"/><circle cx="9" cy="11" r="1.800" fill="#222"/><path d="M1 7q8-5 16 0" stroke="#aaa"/></svg></th>
              <th class="locked" aria-label="Locked"><svg viewBox="0 0 20 20" fill="none"><path d="M4.500 11V7q0-5 5-5t5 5v4" stroke="#888" stroke-width="2.500"/><rect x="2" y="10.500" width="15" height="9.500" rx="1.500" fill="#666"/></svg></th>
              <th>Item</th></tr></thead>
            <tbody>
              <tr><td><input type="checkbox" checked aria-label="Map 1 visible"></td><td><input type="checkbox" aria-label="Map 1 locked"></td>
                <td><div class="entry"><svg viewBox="0 0 19 17"><path d="M3 1.500h15v14H3z" fill="#cfcfcf" stroke="#999"/><path d="M1 1h3v13H3v2H1z" fill="#eee" stroke="#999" stroke-width=".8"/></svg>Map 1</div></td></tr>
              <tr><td><input type="checkbox" checked aria-label="Picture visible"></td><td><input type="checkbox" aria-label="Picture locked"></td>
                <td><div class="entry"><svg viewBox="0 0 19 17"><path d="M1 2.500h17v12H1z" fill="#444" stroke="#aaa"/><path d="M1.500 9q5-4 9-1.500T17.500 9v5h-16z" fill="#f2f2f2"/></svg>&lt;Picture&gt;</div></td></tr>
            </tbody></table></div>
          <div class="hsplit"><i></i></div>
          <div class="tabs"><button>Layout</button><button class="on">Item Properties</button><button>Guides</button></div>
          ${this.dock("Item Properties")}
        </aside>
      </div>
      <footer class="status"><output>x: 274.046 mm</output><output>y: 95.0846 mm</output><output>page: 1</output>
        ${this.combo("zoom", "Zoom level", "58.5%", "#555", false)}
        <input type="range" min="0" max="100" value="5" aria-label="Zoom"></footer>`;
  }
}
